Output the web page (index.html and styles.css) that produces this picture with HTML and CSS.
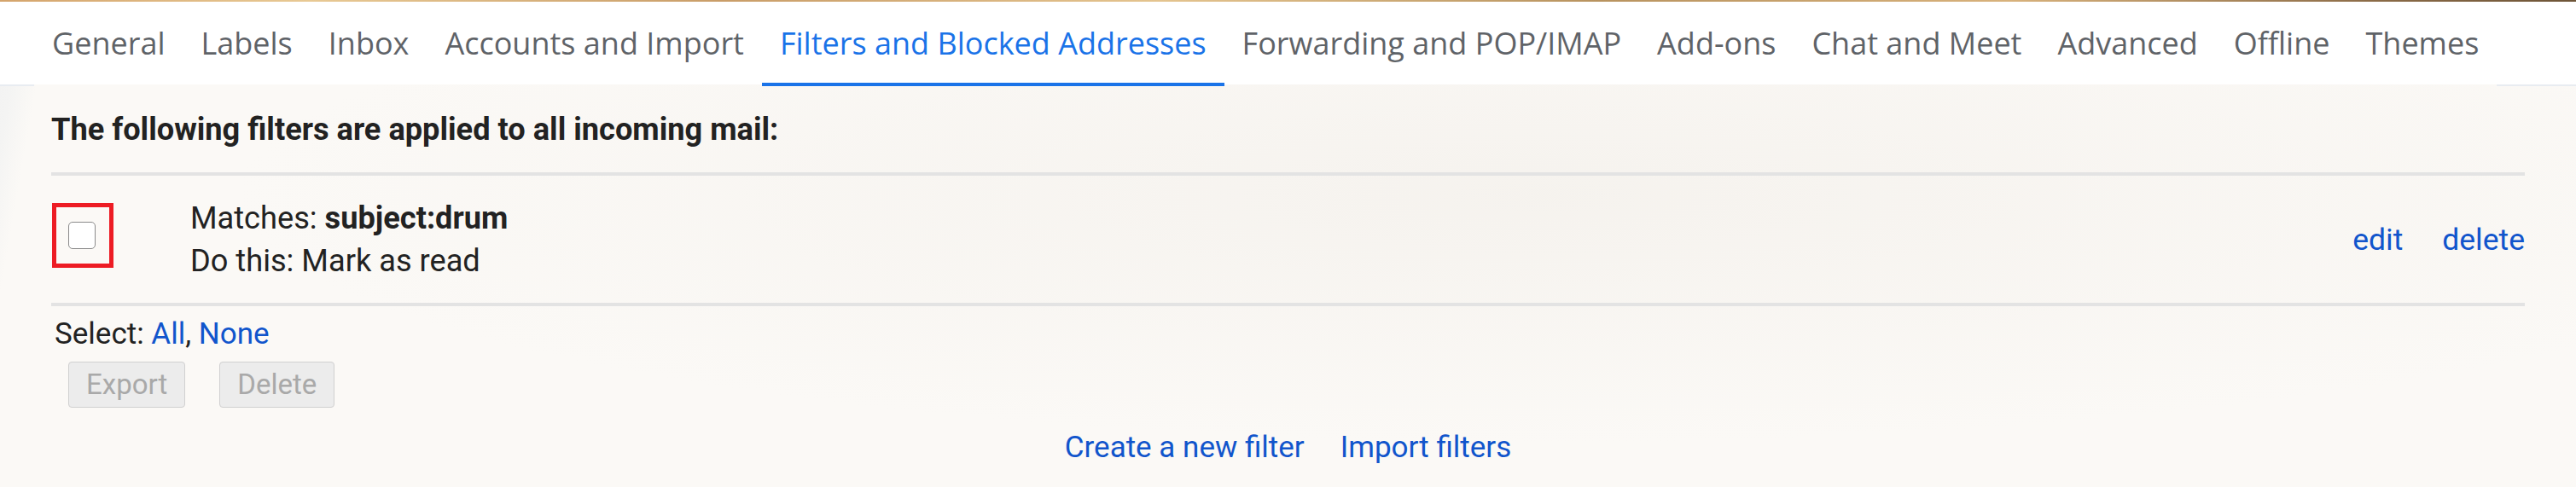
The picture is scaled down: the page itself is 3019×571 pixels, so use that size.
FILE: index.html
```html
<!DOCTYPE html>
<html lang="en">
<head>
<meta charset="utf-8">
<title>Settings - Filters and Blocked Addresses</title>
<link rel="stylesheet" href="styles.css">
</head>
<body>
<div class="topstrip"></div>
<nav class="tabs">
  <div class="tabs-edge tabs-edge-left"></div>
  <a class="tab">General</a>
  <a class="tab">Labels</a>
  <a class="tab">Inbox</a>
  <a class="tab">Accounts and Import</a>
  <a class="tab tab-active">Filters and Blocked Addresses</a>
  <a class="tab">Forwarding and POP/IMAP</a>
  <a class="tab">Add-ons</a>
  <a class="tab">Chat and Meet</a>
  <a class="tab">Advanced</a>
  <a class="tab">Offline</a>
  <a class="tab">Themes</a>
  <div class="tabs-edge tabs-edge-right"></div>
</nav>
<main class="content">
  <h2 class="heading">The following filters are applied to all incoming mail:</h2>
  <div class="filter-row">
    <div class="check-highlight"><span class="checkbox"></span></div>
    <div class="filter-desc">
      <div class="filter-line">Matches: <b>subject:drum</b></div>
      <div class="filter-line">Do this: Mark as read</div>
    </div>
    <div class="filter-actions">
      <a class="link">edit</a>
      <a class="link">delete</a>
    </div>
  </div>
  <div class="select-line">Select: <a class="link">All</a>, <a class="link">None</a></div>
  <div class="bulk-actions">
    <button class="btn" disabled>Export</button>
    <button class="btn" disabled>Delete</button>
  </div>
  <div class="bottom-links">
    <a class="link">Create a new filter</a>
    <a class="link">Import filters</a>
  </div>
</main>
</body>
</html>
```
FILE: styles.css
```css
html, body {
  margin: 0;
  padding: 0;
}
body {
  height: 571px;
  overflow: hidden;
  background: #fbf9f6;
  background-image:
    linear-gradient(100deg, #f2f2f2 0px, #f4f4f3 30px, rgba(251,249,246,0) 60px),
    radial-gradient(ellipse at 60% 40%, rgba(240,236,230,0.5), rgba(251,249,246,0) 60%);
  background-size: 100% 100%;
  font-family: Roboto, "Liberation Sans", sans-serif;
  color: #222222;
}
.topstrip {
  height: 2px;
  background: linear-gradient(90deg, #d4a46c 0%, #e8c994 12%, #c99d68 28%, #e4c48f 45%, #b8935f 62%, #d8b27c 78%, #8c6c48 92%, #6e5538 100%);
}
.tabs {
  display: flex;
  align-items: flex-start;
  height: 99px;
}
.tabs-edge {
  height: 97px;
  background: #ffffff;
  border-bottom: 2px solid #e8ecf1;
}
.tabs-edge-left {
  width: 40px;
  flex: none;
}
.tabs-edge-right {
  flex: 1;
}
.tab {
  flex: none;
  height: 97px;
  line-height: 97px;
  padding: 0 21px;
  background: #ffffff;
  font-family: "Open Sans", Roboto, sans-serif;
  font-size: 36px;
  color: #5f6368;
  white-space: nowrap;
}
.tab-active {
  height: 95px;
  color: #1a73e8;
  border-bottom: 4px solid #1a73e8;
}
.content {
  margin: 0 60px;
}
.heading {
  margin: 26px 0 25px 0;
  font-size: 36.2px;
  line-height: 50px;
  font-weight: 700;
  color: #222222;
}
.filter-row {
  display: flex;
  align-items: center;
  height: 149px;
  border-top: 4px solid #e3e3e3;
  border-bottom: 4px solid #e3e3e3;
}
.check-highlight {
  align-self: flex-start;
  margin: 32px 0 0 1px;
  width: 72px;
  height: 76px;
  box-sizing: border-box;
  border: 5px solid #ed1c24;
  display: flex;
  align-items: center;
  justify-content: center;
}
.checkbox {
  display: block;
  width: 32px;
  height: 32px;
  box-sizing: border-box;
  border: 1.5px solid #8a8a8a;
  border-radius: 5px;
  background: #ffffff;
  margin-right: 2px;
}
.filter-desc {
  margin-left: 90px;
  font-size: 36.2px;
  line-height: 50px;
}
.filter-desc b {
  font-weight: 700;
}
.filter-actions {
  margin-left: auto;
  display: flex;
  gap: 46px;
  font-size: 35.5px;
  line-height: 50px;
}
.link {
  color: #1155cc;
  text-decoration: none;
}
.select-line {
  margin-top: 8px;
  padding-left: 4px;
  font-size: 35px;
  line-height: 50px;
}
.bulk-actions {
  display: flex;
  gap: 40px;
  margin: 7px 0 0 20px;
}
.btn {
  height: 54px;
  padding: 0 20px;
  box-sizing: border-box;
  background: #ececec;
  border: 1.5px solid #d0d0d0;
  border-radius: 4px;
  font-family: Roboto, "Liberation Sans", sans-serif;
  font-size: 33px;
  color: #a9a9a9;
  line-height: 50px;
}
.bottom-links {
  display: flex;
  justify-content: center;
  gap: 42px;
  margin-top: 22px;
  font-size: 35px;
  line-height: 50px;
}
```
